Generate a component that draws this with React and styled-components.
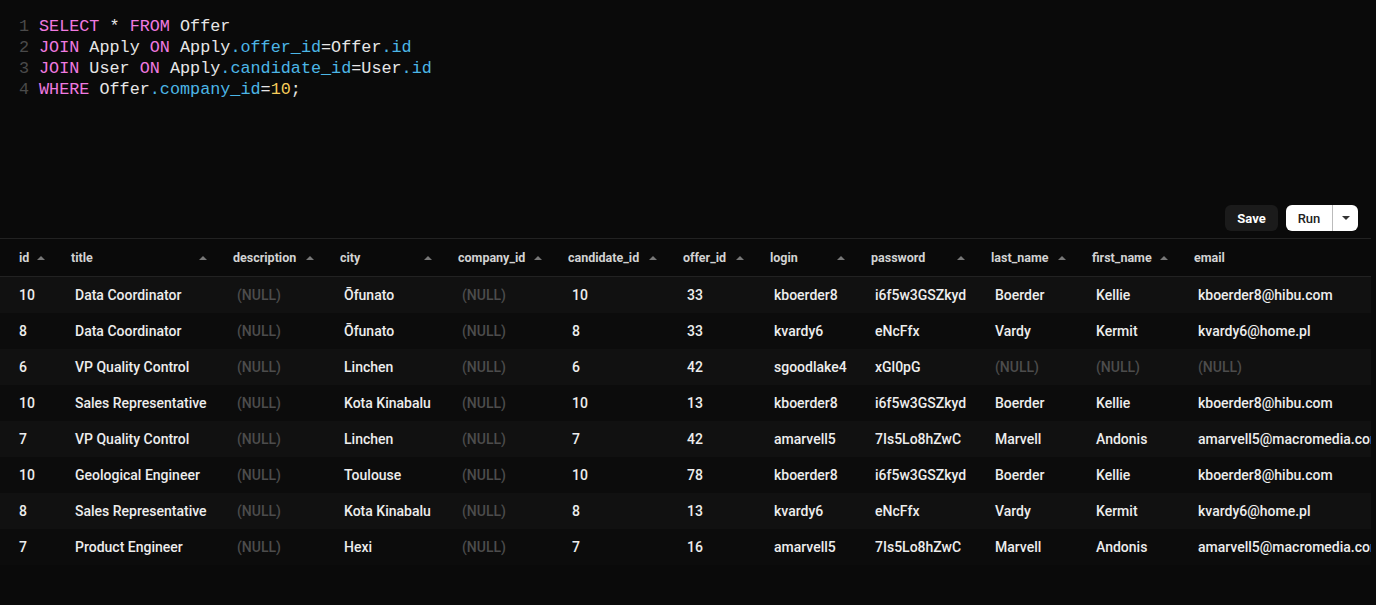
import React from 'react';
import styled, { createGlobalStyle } from 'styled-components';

const GlobalStyle = createGlobalStyle`
  html, body {
    margin: 0;
    background: #0a0a0a;
  }
  body {
    font-family: Roboto, "Liberation Sans", sans-serif;
    color: #ececec;
  }
`;

const Page = styled.div`
  width: 1376px;
  height: 605px;
  overflow: hidden;
  background: #0a0a0a;
  display: flex;
  flex-direction: column;
`;

const Editor = styled.div`
  height: 189px;
  padding-top: 16px;
  font-family: "Liberation Mono", "DejaVu Sans Mono", monospace;
  font-size: 16.8px;
  line-height: 21px;
  color: #e6e6e6;
`;

const Line = styled.div`
  display: flex;
  white-space: pre;
`;

const LineNo = styled.span`
  width: 29px;
  padding-right: 10px;
  text-align: right;
  color: #4a4a4a;
`;

const Kw = styled.span`
  color: #f07ae0;
`;

const Prop = styled.span`
  color: #4cb6e6;
`;

const Num = styled.span`
  color: #f6cc5a;
`;

const Toolbar = styled.div`
  display: flex;
  justify-content: flex-end;
  gap: 8px;
  padding: 0 18px 7px 0;
`;

const SaveButton = styled.button`
  height: 26px;
  width: 53px;
  border: none;
  border-radius: 6px;
  background: #1b1b1b;
  color: #fff;
  font-family: Roboto, "Liberation Sans", sans-serif;
  font-weight: 700;
  font-size: 13px;
  padding: 0;
`;

const RunGroup = styled.div`
  display: flex;
  height: 26px;
  border-radius: 6px;
  background: #fff;
  overflow: hidden;
`;

const RunButton = styled.button`
  width: 47px;
  border: none;
  background: transparent;
  color: #222;
  font-family: Roboto, "Liberation Sans", sans-serif;
  font-weight: 500;
  font-size: 13px;
  padding: 0;
  border-right: 1px solid #bbb;
`;

const CaretButton = styled.button`
  width: 25px;
  border: none;
  background: transparent;
  display: flex;
  align-items: center;
  justify-content: center;
  padding: 0;
  &::after {
    content: '';
    border-left: 4px solid transparent;
    border-right: 4px solid transparent;
    border-top: 4px solid #333;
  }
`;

const TableWrap = styled.div`
  width: 1371px;
  overflow: hidden;
  border-top: 1px solid #222;
`;

const Grid = styled.div`
  display: grid;
  grid-template-columns: 52px 162px 107px 118px 110px 115px 87px 101px 120px 101px 102px 260px;
  width: max-content;
`;

const HeadCell = styled.div`
  height: 37px;
  display: flex;
  align-items: center;
  padding: 0 7px 0 19px;
  gap: 6px;
  font-size: 12.5px;
  font-weight: 700;
  color: #d2d2d2;
  border-bottom: 1px solid #222;
  white-space: nowrap;
  overflow: hidden;
`;

const Arrow = styled.span`
  margin-left: auto;
  flex: none;
  width: 0;
  height: 0;
  border-left: 4.5px solid transparent;
  border-right: 4.5px solid transparent;
  border-bottom: 4.5px solid #777;
`;

const Cell = styled.div`
  height: 36px;
  display: flex;
  align-items: center;
  padding-left: 23px;
  font-size: 14px;
  font-weight: 500;
  white-space: nowrap;
  overflow: hidden;
  background: ${p => (p.$odd ? '#111111' : '#0c0c0c')};
  color: ${p => (p.$null ? '#4c4c4c' : '#ededed')};
`;

const IdCell = styled(Cell)`
  padding-left: 19px;
`;

const columns = [
  'id', 'title', 'description', 'city', 'company_id', 'candidate_id',
  'offer_id', 'login', 'password', 'last_name', 'first_name', 'email',
];

const rows = [
  [10, 'Data Coordinator', null, 'Ōfunato', null, 10, 33, 'kboerder8', 'i6f5w3GSZkyd', 'Boerder', 'Kellie', 'kboerder8@hibu.com'],
  [8, 'Data Coordinator', null, 'Ōfunato', null, 8, 33, 'kvardy6', 'eNcFfx', 'Vardy', 'Kermit', 'kvardy6@home.pl'],
  [6, 'VP Quality Control', null, 'Linchen', null, 6, 42, 'sgoodlake4', 'xGl0pG', null, null, null],
  [10, 'Sales Representative', null, 'Kota Kinabalu', null, 10, 13, 'kboerder8', 'i6f5w3GSZkyd', 'Boerder', 'Kellie', 'kboerder8@hibu.com'],
  [7, 'VP Quality Control', null, 'Linchen', null, 7, 42, 'amarvell5', '7Is5Lo8hZwC', 'Marvell', 'Andonis', 'amarvell5@macromedia.com'],
  [10, 'Geological Engineer', null, 'Toulouse', null, 10, 78, 'kboerder8', 'i6f5w3GSZkyd', 'Boerder', 'Kellie', 'kboerder8@hibu.com'],
  [8, 'Sales Representative', null, 'Kota Kinabalu', null, 8, 13, 'kvardy6', 'eNcFfx', 'Vardy', 'Kermit', 'kvardy6@home.pl'],
  [7, 'Product Engineer', null, 'Hexi', null, 7, 16, 'amarvell5', '7Is5Lo8hZwC', 'Marvell', 'Andonis', 'amarvell5@macromedia.com'],
];

const App = () => (
  <Page>
    <GlobalStyle />
    <Editor>
      <Line><LineNo>1</LineNo><Kw>SELECT</Kw> * <Kw>FROM</Kw> Offer</Line>
      <Line><LineNo>2</LineNo><Kw>JOIN</Kw> Apply <Kw>ON</Kw> Apply<Prop>.offer_id</Prop>=Offer<Prop>.id</Prop></Line>
      <Line><LineNo>3</LineNo><Kw>JOIN</Kw> User <Kw>ON</Kw> Apply<Prop>.candidate_id</Prop>=User<Prop>.id</Prop></Line>
      <Line><LineNo>4</LineNo><Kw>WHERE</Kw> Offer<Prop>.company_id</Prop>=<Num>10</Num>;</Line>
    </Editor>
    <Toolbar>
      <SaveButton>Save</SaveButton>
      <RunGroup>
        <RunButton>Run</RunButton>
        <CaretButton aria-label="More run options" />
      </RunGroup>
    </Toolbar>
    <TableWrap>
      <Grid>
        {columns.map(c => (
          <HeadCell key={c}>
            {c}
            {c !== 'email' && <Arrow />}
          </HeadCell>
        ))}
        {rows.map((r, i) =>
          r.map((v, j) => {
            const C = j === 0 ? IdCell : Cell;
            return (
              <C key={`${i}-${j}`} $odd={i % 2 === 0} $null={v === null}>
                {v === null ? '(NULL)' : v}
              </C>
            );
          })
        )}
      </Grid>
    </TableWrap>
  </Page>
);

export default App;
